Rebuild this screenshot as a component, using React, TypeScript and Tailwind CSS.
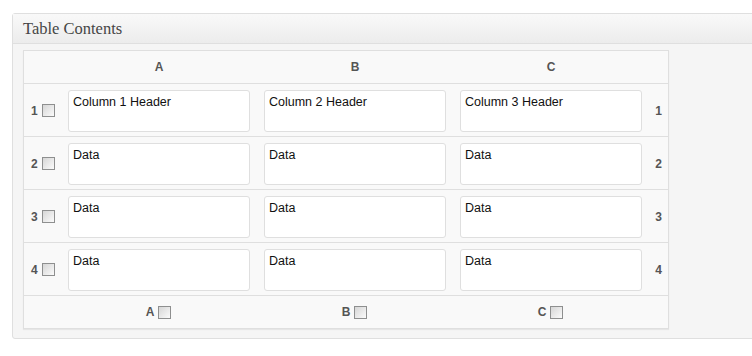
const cols = ['A', 'B', 'C'];
const rows = [
  ['Column 1 Header', 'Column 2 Header', 'Column 3 Header'],
  ['Data', 'Data', 'Data'],
  ['Data', 'Data', 'Data'],
  ['Data', 'Data', 'Data'],
];

function Check() {
  return (
    <span className="inline-block w-[13px] h-[13px] border border-[#8e8f8f] bg-gradient-to-br from-[#d6d6d6] to-[#fbfbfb] shrink-0" />
  );
}

const grid = 'grid grid-cols-[37px_196px_196px_196px_19px]';

export default function App() {
  return (
    <div className="bg-white w-[752px] h-[356px] overflow-hidden pt-[13px] font-['Liberation_Sans',Arial,sans-serif]">
      <div className="ml-[12px] w-[760px] border border-[#dfdfdf] rounded-[3px] bg-[#f5f5f5]">
        {/* Header */}
        <div className="h-[30px] flex items-center px-[10px] border-b border-[#dfdfdf] bg-gradient-to-b from-[#f9f9f9] to-[#ececec]">
          <h3 className="text-[16.5px] text-[#464646] font-['Liberation_Serif',Georgia,serif] pt-[1px]">Table Contents</h3>
        </div>

        {/* Body */}
        <div className="pt-[6px] pb-[9px] pl-[10px]">
          <div className="w-[646px] border border-[#dfdfdf] bg-[#f9f9f9] shadow-[0_1px_1px_rgba(0,0,0,0.06)]">
            <div className={`${grid} h-[33px] border-b border-[#dfdfdf]`}>
              <div />
              {cols.map(c => (
                <div key={c} className="flex items-center justify-center text-[12px] font-bold text-[#555]">{c}</div>
              ))}
              <div />
            </div>

            {rows.map((row, i) => (
              <div key={i} className={`${grid} h-[53px] border-b border-[#dfdfdf]`}>
                <div className="flex items-center gap-[4px] pl-[7px] pt-[1px] text-[12px] font-bold text-[#555]">
                  <span>{i + 1}</span>
                  <Check />
                </div>
                {row.map((cell, j) => (
                  <div key={j} className="pt-[6px] px-[7px]">
                    <div className="h-[42px] bg-white border border-[#dfdfdf] rounded-[3px] px-[4px] py-[4px] text-[12.5px] leading-[15px] text-[#111]">
                      {cell}
                    </div>
                  </div>
                ))}
                <div className="flex items-center justify-center pt-[1px] text-[12px] font-bold text-[#555]">{i + 1}</div>
              </div>
            ))}

            <div className={`${grid} h-[32px]`}>
              <div />
              {cols.map(c => (
                <div key={c} className="flex items-center justify-center gap-[4px] pr-[1px] text-[12px] font-bold text-[#555]">
                  <span>{c}</span>
                  <Check />
                </div>
              ))}
              <div />
            </div>
          </div>
        </div>
      </div>
    </div>
  );
}
